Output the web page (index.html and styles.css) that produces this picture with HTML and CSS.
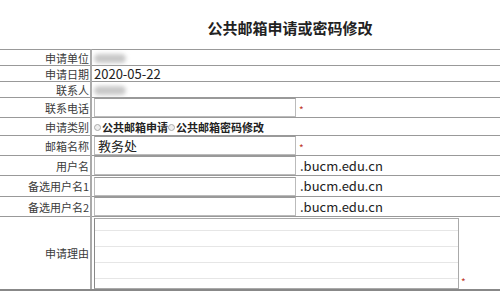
FILE: index.html
```html
<!DOCTYPE html>
<html lang="zh-CN">
<head>
  <meta charset="UTF-8" />
  <title>公共邮箱申请或密码修改</title>
  <link rel="stylesheet" href="styles.css">
</head>
<body>

  <h2 class="title">公共邮箱申请或密码修改</h2>

  <table class="apply">
    <tr class="r16">
      <td class="label">申请单位</td>
      <td><span class="blur"></span></td>
    </tr>
    <tr class="r16">
      <td class="label">申请日期</td>
      <td class="latin">2020-05-22</td>
    </tr>
    <tr class="r16">
      <td class="label">联系人</td>
      <td><span class="blur"></span></td>
    </tr>
    <tr class="r20">
      <td class="label">联系电话</td>
      <td><input type="text" /><span class="req">*</span></td>
    </tr>
    <tr class="r18">
      <td class="label">申请类别</td>
      <td class="kind">
        <span class="radio"></span><b>公共邮箱申请</b><span class="radio"></span><b>公共邮箱密码修改</b>
      </td>
    </tr>
    <tr class="r20">
      <td class="label">邮箱名称</td>
      <td><input type="text" value="教务处" /><span class="req">*</span></td>
    </tr>
    <tr class="r20">
      <td class="label">用户名</td>
      <td><input type="text" /><span class="domain">.bucm.edu.cn</span></td>
    </tr>
    <tr class="r21">
      <td class="label">备选用户名1</td>
      <td><input type="text" /><span class="domain">.bucm.edu.cn</span></td>
    </tr>
    <tr class="r20">
      <td class="label">备选用户名2</td>
      <td><input type="text" /><span class="domain">.bucm.edu.cn</span></td>
    </tr>
    <tr class="r73">
      <td class="label">申请理由</td>
      <td class="reason"><textarea></textarea><span class="req">*</span></td>
    </tr>
  </table>

</body>
</html>
```

FILE: styles.css
```css
body {
  margin: 0;
  font-family: "Noto Sans CJK SC", "Noto Sans", sans-serif;
  background: #fff;
  color: #333;
}

.title {
  margin: 0;
  height: 49px;
  padding-left: 80px;
  line-height: 56px;
  text-align: center;
  font-size: 15px;
  font-weight: bold;
  color: #222;
}

.apply {
  width: 100%;
  border-collapse: collapse;
  font-size: 12px;
}

.apply td {
  border-top: 1px solid #999;
  border-bottom: 1px solid #999;
  padding: 0 0 0 2px;
  line-height: 14px;
  vertical-align: middle;
  white-space: nowrap;
}

.apply td.label {
  width: 89px;
  padding: 0 1px 0 0;
  text-align: right;
  border-right: 2px solid #aaa;
  font-size: 11px;
  color: #3a3a3a;
}

.r16 td { height: 15px; }
.r18 td { height: 17px; }
.r20 td { height: 19px; }
.r21 td { height: 20px; }
.r73 td { height: 72px; }

.apply tr:last-child td {
  border-bottom: 2px solid #888;
}

.latin {
  font-size: 13px;
  color: #222;
}

.blur {
  display: inline-block;
  width: 32px;
  height: 9px;
  margin-top: 3px;
  background: #c8c8c8;
  border-radius: 5px;
  filter: blur(2px);
}

input {
  box-sizing: border-box;
  width: 202px;
  height: 19px;
  margin: 0;
  padding: 0 3px;
  border: 1px solid #bbb;
  border-top-color: #999;
  font-family: inherit;
  font-size: 13px;
  color: #222;
  vertical-align: middle;
}

.req {
  display: inline-block;
  margin-left: 3px;
  font-size: 10px;
  color: #c0392b;
  vertical-align: -3px;
}

.domain {
  margin-left: 4px;
  font-size: 13px;
  color: #222;
  vertical-align: middle;
}

.kind b {
  color: #222;
  font-size: 11px;
}

.radio {
  display: inline-block;
  box-sizing: border-box;
  width: 7px;
  height: 7px;
  margin: 0 1px 0 0;
  border: 1px solid #aaa;
  border-radius: 50%;
  background: #eee;
  vertical-align: 1px;
}

.reason textarea {
  box-sizing: border-box;
  width: 365px;
  height: 71px;
  margin: 0;
  border: 1px solid #aaa;
  border-left-color: #888;
  resize: none;
  vertical-align: bottom;
  background-color: #fff;
  background-image: repeating-linear-gradient(to bottom, transparent 0, transparent 11px, #e6e6e6 11px, #e6e6e6 12px, transparent 12px, transparent 16px);
}

.reason .req {
  vertical-align: bottom;
  margin-left: 2px;
}
```
